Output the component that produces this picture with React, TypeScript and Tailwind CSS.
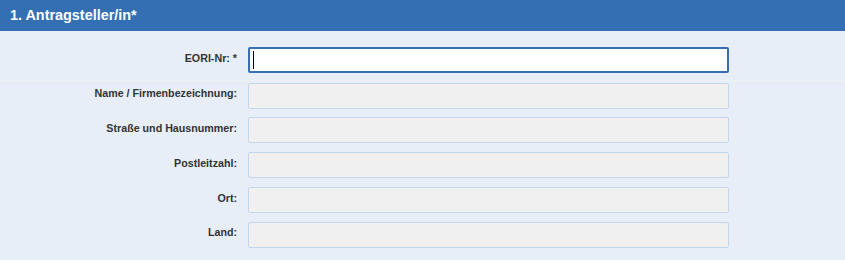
import React from "react";

const fields = [
  "Name / Firmenbezeichnung:",
  "Straße und Hausnummer:",
  "Postleitzahl:",
  "Ort:",
  "Land:",
];

export default function App() {
  return (
    <div
      className="w-[845px] h-[264px] bg-white"
      style={{ fontFamily: '"Liberation Sans", Arial, sans-serif' }}
    >
      <div className="h-[31px] bg-[#346fb3] flex items-center pl-[10px]">
        <h2 className="text-white font-bold text-[14.4px] leading-none">1. Antragsteller/in*</h2>
      </div>
      <div className="h-[229px] bg-[#e7eef7] flex flex-col">
        <div className="pt-[16px] pb-[7px] border-b border-[#eef1f4] flex items-center">
          <label className="w-[237px] text-right text-[10.7px] font-bold text-[#333] pb-[4px]">EORI-Nr: *</label>
          <div className="relative ml-[11px]">
            <input
              className="w-[481px] h-[26px] bg-white border-2 border-[#3670b2] rounded-[2px] outline-none"
              aria-label="EORI-Nr"
            />
            <span className="absolute left-[5px] top-[4px] w-px h-[18px] bg-black" />
          </div>
        </div>
        <div className="pt-[1.5px] flex flex-col gap-[8.75px]">
          {fields.map((f) => (
            <div key={f} className="flex items-center">
              <label className="w-[237px] text-right text-[10.7px] font-bold text-[#333] pb-[4px]">{f}</label>
              <input
                disabled
                aria-label={f}
                className="ml-[11px] w-[481px] h-[26px] bg-[#f0f0f0] border border-[#c4d6ea] rounded-[2px]"
              />
            </div>
          ))}
        </div>
      </div>
    </div>
  );
}
